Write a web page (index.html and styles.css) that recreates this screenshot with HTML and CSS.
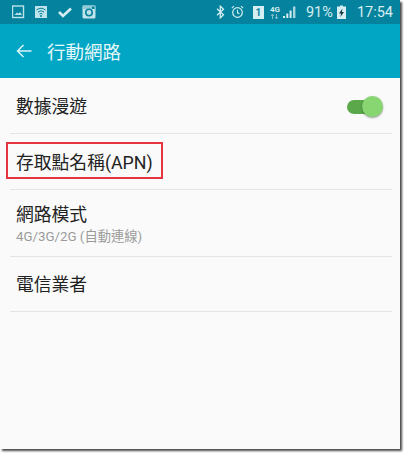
FILE: index.html
```html
<!DOCTYPE html>
<html lang="zh-Hant">
<head>
    <meta charset="UTF-8">
    <meta name="viewport" content="width=device-width, initial-scale=1.0">
    <title>行動網路</title>
    <link rel="stylesheet" href="styles.css">
</head>
<body>
    <div class="screen">
        <div class="status-bar">
            <div class="status-left">
                <svg class="icon" width="13" height="14" viewBox="0 0 13 14"><rect x="0.5" y="1" width="11" height="11.5" fill="none" stroke="#bfe3ea" stroke-width="1.4"/><path d="M2.5 10 L5 7.5 L6.5 8.8 L8 7 L10 10 Z" fill="#bfe3ea"/></svg>
                <svg class="icon" width="13" height="14" viewBox="0 0 13 14"><rect x="0" y="1" width="12" height="12" fill="#bfe3ea"/><path d="M1.5 5 Q6 1.5 10.5 5 M3 7 Q6 4.5 9 7 M4.5 9 Q6 7.8 7.5 9" fill="none" stroke="#05829d" stroke-width="1"/><circle cx="6" cy="11" r="1" fill="#05829d"/></svg>
                <svg class="icon" width="14" height="14" viewBox="0 0 14 14"><path d="M1 7 L5 11 L13 3.500" fill="none" stroke="#d5eef2" stroke-width="2.600"/></svg>
                <svg class="icon" width="14" height="14" viewBox="0 0 14 14"><rect x="0.500" y="0.500" width="13" height="13" rx="1.500" fill="#bfe3ea"/><rect x="0.500" y="0.500" width="13" height="3.500" fill="#8fcbd8"/><circle cx="7" cy="7.500" r="3.200" fill="#bfe3ea" stroke="#05829d" stroke-width="1.600"/><rect x="10" y="1.500" width="2.500" height="2.500" fill="#05829d"/></svg>
            </div>
            <div class="status-right">
                <svg class="icon bt" width="9" height="14" viewBox="0 0 9 14"><path d="M1 3.800 L7.500 9.800 L4.300 12.800 V1.200 L7.500 4.200 L1 10.200" fill="none" stroke="#d5eef2" stroke-width="1.300"/></svg>
                <svg class="icon clock" width="13" height="14" viewBox="0 0 13 14"><circle cx="6.500" cy="7.500" r="4.800" fill="none" stroke="#d5eef2" stroke-width="1.200"/><path d="M6.500 4.800 V7.800 L8.500 8.800 M0.800 3.200 L3 1.200 M12.200 3.200 L10 1.200" fill="none" stroke="#d5eef2" stroke-width="1.100"/></svg>
                <div class="sim">1</div>
                <div class="net">
                    <span class="net-label">4G</span>
                    <svg width="9" height="5" viewBox="0 0 9 5"><path d="M2.500 5 V0 M1 2 L2.500 0 L4 2 M6.500 0 V5 M5 3 L6.500 5 L8 3" fill="none" stroke="#7fbccb" stroke-width="1"/></svg>
                </div>
                <svg class="icon signal" width="13" height="14" viewBox="0 0 13 14"><path d="M0 13 H2 V11 H0 Z M3.300 13 H5.300 V8.500 H3.300 Z M6.600 13 H8.600 V5.500 H6.600 Z" fill="#d5eef2"/><path d="M10 13 H12.400 V1.500 H10 Z" fill="#a8d5df"/></svg>
                <span class="battery-text">91%</span>
                <svg class="icon battery" width="9" height="14" viewBox="0 0 9 14"><path d="M3 0.500 H6 V1.500 H9 V14 H0 V1.500 H3 Z" fill="#d5eef2"/><path d="M5.500 3.500 L2 8.500 H4.200 L3.300 12 L7 7 H4.800 Z" fill="#10323c"/></svg>
                <span class="clock-text">17:54</span>
            </div>
        </div>
        <div class="action-bar">
            <svg class="back" width="16" height="14" viewBox="0 0 16 14"><path d="M15.500 7 H1.500 M7.500 1 L1.500 7 L7.500 13" fill="none" stroke="#d9f4f8" stroke-width="1.500"/></svg>
            <h1 class="page-title">行動網路</h1>
        </div>
        <div class="settings-list">
            <div class="row row-toggle">
                <span class="row-title">數據漫遊</span>
                <div class="switch">
                    <div class="switch-knob"></div>
                </div>
            </div>
            <div class="row row-apn">
                <span class="row-title">存取點名稱(APN)</span>
                <div class="highlight"></div>
            </div>
            <div class="row row-mode">
                <span class="row-title">網路模式</span>
                <span class="row-sub">4G/3G/2G (自動連線)</span>
            </div>
            <div class="row">
                <span class="row-title">電信業者</span>
            </div>
        </div>
    </div>
</body>
</html>
```

FILE: styles.css
```css
html, body {
    margin: 0;
    padding: 0;
    height: 453px;
    overflow: hidden;
    background: #fff;
    font-family: "Roboto", "Noto Sans CJK TC", sans-serif;
}
.screen {
    width: 400px;
    height: 449px;
    background: #fafafa;
    box-shadow: 2px 2px 2px #4a4a4a;
}
.status-bar {
    height: 24px;
    background: #05829d;
    display: flex;
    justify-content: space-between;
    align-items: center;
    color: #d5eef2;
}
.status-left {
    display: flex;
    align-items: center;
    gap: 10px;
    padding-left: 12px;
}
.status-right {
    display: flex;
    align-items: center;
    padding-right: 7px;
}
.icon {
    display: block;
}
.clock {
    margin-left: 6px;
}
.sim {
    width: 11px;
    height: 13px;
    margin-left: 9px;
    background: #d5eef2;
    color: #05829d;
    font-size: 10px;
    font-weight: 700;
    line-height: 13px;
    text-align: center;
}
.net {
    display: flex;
    flex-direction: column;
    align-items: center;
    margin-left: 6px;
}
.net-label {
    font-size: 8px;
    font-weight: 700;
    line-height: 9px;
}
.net svg {
    display: block;
}
.signal {
    margin-left: 3px;
}
.battery-text {
    font-size: 14.500px;
    margin-left: 10px;
}
.battery {
    margin-left: 4px;
}
.clock-text {
    font-size: 14.500px;
    margin-left: 11px;
}
.action-bar {
    height: 54px;
    background: #00a6c4;
    display: flex;
    align-items: center;
    padding-left: 16px;
}
.back {
    margin-right: 15px;
}
.page-title {
    margin: 0;
    font-size: 18.500px;
    font-weight: 400;
    color: #e6f8fb;
}
.settings-list {
    padding: 0 8px 0 10px;
}
.row {
    position: relative;
    box-sizing: border-box;
    height: 55px;
    border-bottom: 1px solid #e4e4e4;
    display: flex;
    flex-direction: column;
    justify-content: center;
    padding: 2px 0 0 6px;
}
.row-toggle {
    height: 56px;
    flex-direction: row;
    justify-content: space-between;
    align-items: center;
}
.row-apn {
    height: 56px;
}
.row-mode {
    height: 67px;
    padding-top: 2px;
}
.row-title {
    font-size: 17.800px;
    line-height: 24px;
    color: #222;
}
.row-sub {
    margin-top: 1px;
    font-size: 13.300px;
    line-height: 17px;
    color: #9a9a9a;
}
.switch {
    position: relative;
    width: 30px;
    height: 14px;
    margin-right: 15px;
    border-radius: 7px;
    background: #5aa84a;
}
.switch-knob {
    position: absolute;
    right: -6px;
    top: -4px;
    width: 21px;
    height: 21px;
    border-radius: 50%;
    background: #88d672;
    box-shadow: 0 1px 2px rgba(0, 0, 0, 0.4);
}
.highlight {
    position: absolute;
    left: -4px;
    top: 8px;
    width: 153px;
    height: 33px;
    border: 2px solid #e8343f;
}
```
